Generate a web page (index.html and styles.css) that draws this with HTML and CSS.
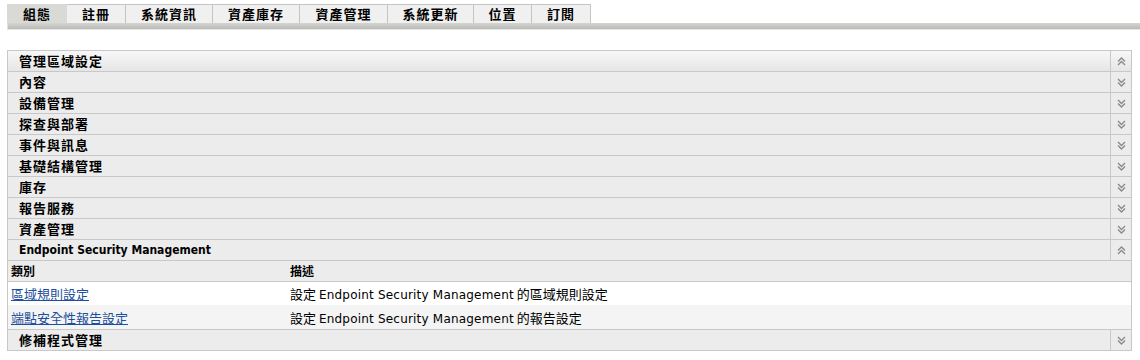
FILE: index.html
```html
<!DOCTYPE html>
<html lang="zh-Hant">

<head>
    <meta charset="UTF-8">
    <title>組態</title>
    <link rel="stylesheet" href="styles.css">
</head>

<body>
    <div class="tabs">
        <div class="tab-row">
            <div class="tab active" style="width: 60px">組態</div>
            <div class="tab" style="width: 59px">註冊</div>
            <div class="tab" style="width: 87px">系統資訊</div>
            <div class="tab" style="width: 87px">資產庫存</div>
            <div class="tab" style="width: 88px">資產管理</div>
            <div class="tab" style="width: 86px">系統更新</div>
            <div class="tab" style="width: 58px">位置</div>
            <div class="tab" style="width: 59px">訂閱</div>
        </div>
        <div class="tab-bar"></div>
    </div>

    <div class="panel">
        <div class="section first">
            <div class="section-title">管理區域設定</div>
            <div class="toggle"><svg width="9" height="9" viewBox="0 0 9 9"><path d="M1 4.5 4.5 1 8 4.5M1 8 4.5 4.5 8 8" fill="none" stroke="#8a8a8a" stroke-width="1.4"/></svg></div>
        </div>
        <div class="section">
            <div class="section-title">內容</div>
            <div class="toggle"><svg width="9" height="9" viewBox="0 0 9 9"><path d="M1 1 4.5 4.5 8 1M1 4.5 4.5 8 8 4.5" fill="none" stroke="#8a8a8a" stroke-width="1.4"/></svg></div>
        </div>
        <div class="section">
            <div class="section-title">設備管理</div>
            <div class="toggle"><svg width="9" height="9" viewBox="0 0 9 9"><path d="M1 1 4.5 4.5 8 1M1 4.5 4.5 8 8 4.5" fill="none" stroke="#8a8a8a" stroke-width="1.4"/></svg></div>
        </div>
        <div class="section">
            <div class="section-title">探查與部署</div>
            <div class="toggle"><svg width="9" height="9" viewBox="0 0 9 9"><path d="M1 1 4.5 4.5 8 1M1 4.5 4.5 8 8 4.5" fill="none" stroke="#8a8a8a" stroke-width="1.4"/></svg></div>
        </div>
        <div class="section">
            <div class="section-title">事件與訊息</div>
            <div class="toggle"><svg width="9" height="9" viewBox="0 0 9 9"><path d="M1 1 4.5 4.5 8 1M1 4.5 4.5 8 8 4.5" fill="none" stroke="#8a8a8a" stroke-width="1.4"/></svg></div>
        </div>
        <div class="section">
            <div class="section-title">基礎結構管理</div>
            <div class="toggle"><svg width="9" height="9" viewBox="0 0 9 9"><path d="M1 1 4.5 4.5 8 1M1 4.5 4.5 8 8 4.5" fill="none" stroke="#8a8a8a" stroke-width="1.4"/></svg></div>
        </div>
        <div class="section">
            <div class="section-title">庫存</div>
            <div class="toggle"><svg width="9" height="9" viewBox="0 0 9 9"><path d="M1 1 4.5 4.5 8 1M1 4.5 4.5 8 8 4.5" fill="none" stroke="#8a8a8a" stroke-width="1.4"/></svg></div>
        </div>
        <div class="section">
            <div class="section-title">報告服務</div>
            <div class="toggle"><svg width="9" height="9" viewBox="0 0 9 9"><path d="M1 1 4.5 4.5 8 1M1 4.5 4.5 8 8 4.5" fill="none" stroke="#8a8a8a" stroke-width="1.4"/></svg></div>
        </div>
        <div class="section">
            <div class="section-title">資產管理</div>
            <div class="toggle"><svg width="9" height="9" viewBox="0 0 9 9"><path d="M1 1 4.5 4.5 8 1M1 4.5 4.5 8 8 4.5" fill="none" stroke="#8a8a8a" stroke-width="1.4"/></svg></div>
        </div>
        <div class="section">
            <div class="section-title latin-bold">Endpoint Security Management</div>
            <div class="toggle"><svg width="9" height="9" viewBox="0 0 9 9"><path d="M1 4.5 4.5 1 8 4.5M1 8 4.5 4.5 8 8" fill="none" stroke="#8a8a8a" stroke-width="1.4"/></svg></div>
        </div>

        <div class="grid-head">
            <div class="col-name">類別</div>
            <div class="col-desc">描述</div>
        </div>
        <div class="grid-row">
            <div class="col-name"><a href="#">區域規則設定</a></div>
            <div class="col-desc">設定 <span class="latin">Endpoint Security Management</span> 的區域規則設定</div>
        </div>
        <div class="grid-row alt">
            <div class="col-name"><a href="#">端點安全性報告設定</a></div>
            <div class="col-desc">設定 <span class="latin">Endpoint Security Management</span> 的報告設定</div>
        </div>

        <div class="section last">
            <div class="section-title">修補程式管理</div>
            <div class="toggle"><svg width="9" height="9" viewBox="0 0 9 9"><path d="M1 1 4.5 4.5 8 1M1 4.5 4.5 8 8 4.5" fill="none" stroke="#8a8a8a" stroke-width="1.4"/></svg></div>
        </div>
    </div>
</body>

</html>
```

FILE: styles.css
```css
/* Reset */
* {
    margin: 0;
    padding: 0;
    box-sizing: border-box;
}

body {
    background: #ffffff;
    font-family: "Noto Sans CJK TC", "DejaVu Sans", sans-serif;
    font-size: 13px;
    color: #000000;
    padding: 4px 0 0 7px;
}

/* Tabs */
.tab-row {
    display: flex;
}

.tab {
    height: 19px;
    line-height: 18px;
    text-align: center;
    font-weight: bold;
    font-size: 13px;
    letter-spacing: 1px;
    background: #f0f0f0;
    border: 1px solid #c4c4c4;
    border-bottom: none;
    border-left: none;
}

.tab:first-child {
    border-left: 1px solid #c4c4c4;
}

.tab.active {
    background: #d9d9d5;
    border-color: #d9d9d5;
}

.tab-bar {
    height: 7px;
    background: linear-gradient(#d4d4d0, #b9b9b5);
    border-left: 1px solid #e2e2e2;
    border-bottom: 1px solid #e6e6e6;
}

/* Panel */
.panel {
    margin-top: 20px;
    width: 1125px;
    border: 1px solid #c8c8c8;
    border-top: none;
}

.section {
    display: flex;
    height: 21px;
    background: #ececec;
    border-top: 1px solid #c8c8c8;
}

.section.first {
    background: linear-gradient(#f7f7f7, #e6e6e6);
}

.section-title {
    flex: 1;
    padding-left: 11px;
    font-weight: bold;
    letter-spacing: 1px;
    line-height: 20px;
}

.section-title.latin-bold {
    font-family: "DejaVu Sans Condensed", "DejaVu Sans", sans-serif;
    font-size: 12px;
    letter-spacing: 0;
}

.toggle {
    width: 21px;
    display: flex;
    align-items: center;
    justify-content: center;
    border-left: 1px solid #c8c8c8;
}

/* Grid */
.grid-head,
.grid-row {
    display: flex;
    border-top: 1px solid #c8c8c8;
}

.grid-head {
    height: 21px;
    line-height: 20px;
    font-size: 12px;
    background: #ececec;
    font-weight: bold;
}

.grid-row {
    height: 24px;
    line-height: 24px;
    background: #ffffff;
    border-top-color: #ffffff;
}

.grid-row.alt {
    background: #f4f4f4;
    border-top-color: #f4f4f4;
}

.grid-head + .grid-row {
    border-top-color: #c8c8c8;
}

.col-name {
    width: 282px;
    padding-left: 3px;
}

.col-desc {
    flex: 1;
}

.latin {
    font-family: "DejaVu Sans", sans-serif;
    font-size: 12px;
    letter-spacing: 0.2px;
}

a {
    color: #1c4f9c;
}
```
